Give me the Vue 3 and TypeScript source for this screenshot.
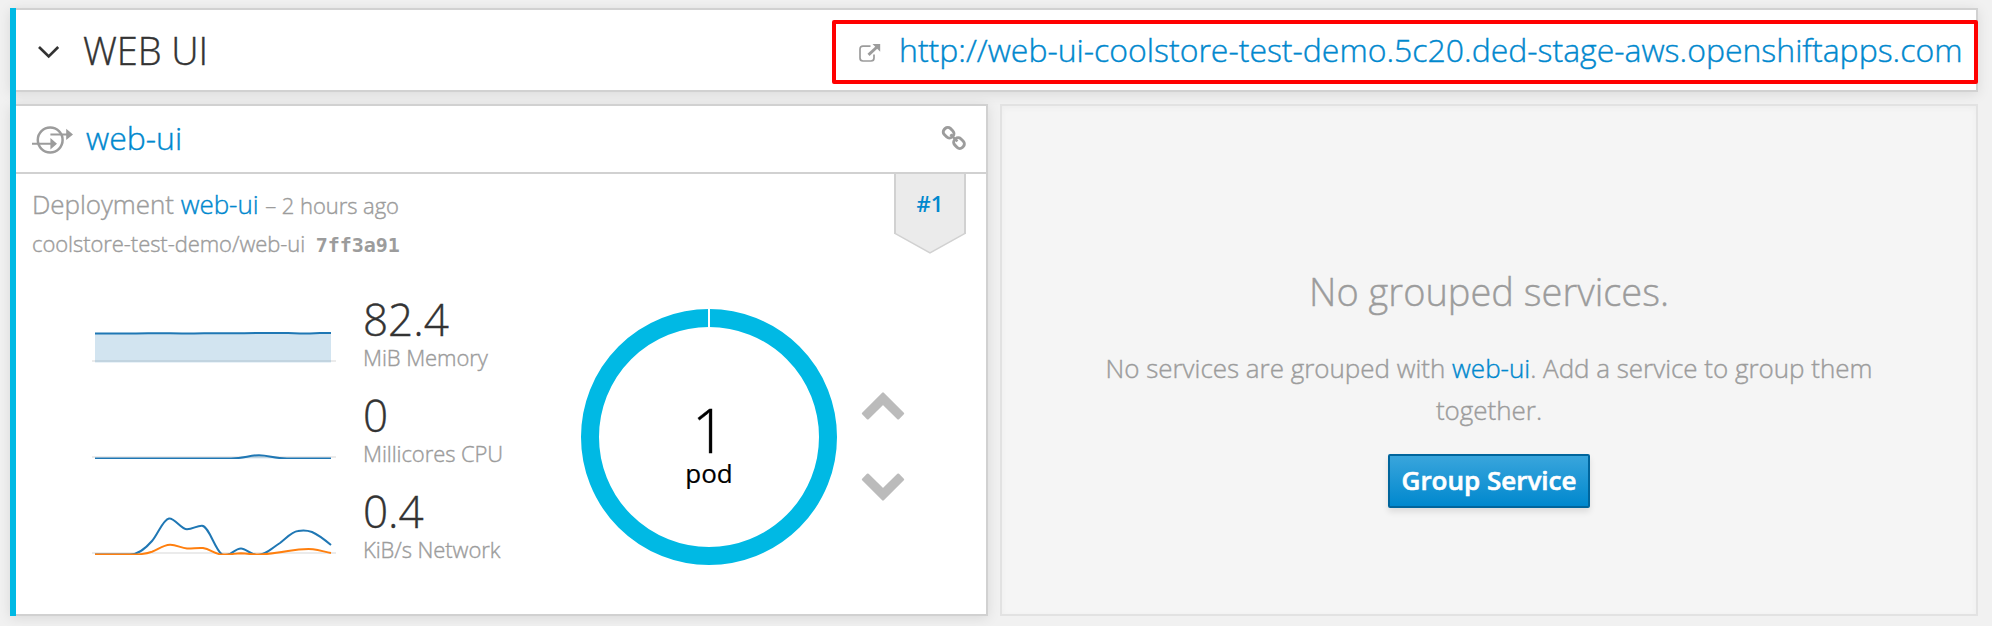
<script setup lang="ts">
interface Series { color: string; line: string; area?: string }
interface Metric { value: string; label: string; series: Series[] }

const routeUrl = 'http://web-ui-coolstore-test-demo.5c20.ded-stage-aws.openshiftapps.com'

const metrics: Metric[] = [
  {
    value: '82.4',
    label: 'MiB Memory',
    series: [
      {
        color: '#1f77b4',
        line: 'M3 41.6H44L56 41.2H78L90 41.6H102L112 41.2H152L166 41H196L208 41.4H218L228 41H239',
        area: 'M3 41.6L44 41.6L56 41.2L152 41.2L239 41V70.6H3Z',
      },
    ],
  },
  {
    value: '0',
    label: 'Millicores CPU',
    series: [
      {
        color: '#1f77b4',
        line: 'M3 70.5H139C152 70.5 157 67.2 167 67.2C177 67.2 182 70.5 195 70.5H239',
        area: 'M139 70.5C152 70.5 157 67.2 167 67.2C177 67.2 182 70.5 195 70.5Z',
      },
    ],
  },
  {
    value: '0.4',
    label: 'KiB/s Network',
    series: [
      {
        color: '#1f77b4',
        line: 'M3 70.6H38C46 70.6 53 65 60 57C66 50 71 35.5 77 34.5C83 34 89 45 95 45.3C101 45 105 41.5 110 41.7C117 42 123 66 130 70.4Q133 72 138 70C142 67.5 145 64.5 149 64.5C154 64.5 159 71 166 71C173 71 179 65 188 59C195 53.5 200 47.5 206 47C211 46 216 46.5 220 48C227 51 233 56 239 61',
      },
      {
        color: '#ff7f0e',
        line: 'M3 70.6H40C49 70.6 53 70 60 67.7C66 65.5 71 61 78 60.7C84 60.5 89 64 95 64.5C101 64.7 105 63.5 111 64C118 65 123 70 130 70.6C139 70.8 143 69.3 149 69.3C157 69.5 160 70.7 168 70.5C178 70 187 68.6 196 67.1C205 65.5 214 64.8 221 65.2C228 66 233 68 239 69',
      },
    ],
  },
]
</script>

<template>
  <main class="overview">
    <section class="group">
      <header class="panel group-head">
        <svg class="toggle" width="24" height="16" viewBox="0 0 24 16">
          <path d="M3 3L12.7 12.4L22.2 3" fill="none" stroke="#333" stroke-width="2.7" />
        </svg>
        <h2>WEB UI</h2>
        <div class="route">
          <svg width="22" height="20" viewBox="0 0 22 20">
            <path d="M11.5 3.2H4Q1 3.2 1 6.2V15Q1 18 4 18H12Q15 18 15 15V11.5" fill="none" stroke="#9c9c9c" stroke-width="1.7" />
            <path d="M9.5 11.8L18 4" stroke="#9c9c9c" stroke-width="3" />
            <path d="M13.5 1H21.2V8.8Z" fill="#9c9c9c" />
          </svg>
          <a>{{ routeUrl }}</a>
        </div>
      </header>

      <div class="columns">
        <article class="panel service">
          <header class="service-head">
            <svg width="42" height="28" viewBox="0 0 42 28" fill="none" stroke="#9c9c9c">
              <circle cx="18.2" cy="14" r="12.4" stroke-width="2.5" />
              <path d="M0 17.7H20M18.4 8.4H36" stroke-width="2" />
              <path d="M18.4 12L25 17.7L18.4 23.4ZM34.2 2.8L41 8.4L34.2 14Z" fill="#9c9c9c" stroke="none" />
            </svg>
            <a>web-ui</a>
            <svg class="chain" width="26" height="26" viewBox="0 0 26 26" fill="none" stroke="#9c9c9c" stroke-width="2.9">
              <rect x="-5.4" y="-4.3" width="10.8" height="8.6" rx="3.6" transform="translate(7.6 7.7) rotate(45)" />
              <rect x="-5.4" y="-4.3" width="10.8" height="8.6" rx="3.6" transform="translate(18 18.1) rotate(45)" />
              <path d="M9.4 9.4L16.4 16.4" stroke-width="2.6" />
            </svg>
          </header>

          <div class="deployment">
            <div class="info">
              <p class="name">Deployment <a>web-ui</a> <small>– 2 hours ago</small></p>
              <p class="image">coolstore-test-demo/web-ui <code>7ff3a91</code></p>
            </div>
            <div class="ribbon">
              <svg width="72" height="80" viewBox="0 0 72 80">
                <path d="M1 0V59.2L36 79L71 59.2V0" fill="#ebebeb" />
                <path d="M1 0V60M71 0V60" stroke="#d1d1d1" stroke-width="2" />
                <path d="M.5 59.2L36 78.9L71.5 59.2" fill="none" stroke="#d1d1d1" stroke-width="1.5" />
              </svg>
              <a>#1</a>
            </div>
          </div>

          <div class="status">
            <ul class="metrics">
              <li v-for="m in metrics" :key="m.label">
                <svg width="244" height="71" viewBox="0 0 244 71">
                  <path d="M0 69H244" stroke="#ebebeb" stroke-width="2" />
                  <template v-for="s in m.series" :key="s.color">
                    <path v-if="s.area" :d="s.area" :fill="s.color" opacity=".2" />
                    <path :d="s.line" :stroke="s.color" fill="none" stroke-width="2" />
                  </template>
                </svg>
                <div class="reading">
                  <strong>{{ m.value }}</strong>
                  <span>{{ m.label }}</span>
                </div>
              </li>
            </ul>
            <div class="donut">
              <svg width="256" height="256" viewBox="0 0 256 256">
                <circle cx="128" cy="128" r="119" fill="none" stroke="#00b9e4" stroke-width="18" />
                <path d="M128 0V20" stroke="#fff" stroke-width="2" />
              </svg>
              <div class="pods"><b>1</b><span>pod</span></div>
            </div>
            <div class="scale">
              <svg width="44" height="30" viewBox="0 0 44 30">
                <path d="M22 2.5L42 22.5L37.2 27.3L22 12.4L6.8 27.3L2 22.5Z" />
              </svg>
              <svg width="44" height="30" viewBox="0 0 44 30">
                <path d="M22 27.5L42 7.5L37.2 2.7L22 17.6L6.8 2.7L2 7.5Z" />
              </svg>
            </div>
          </div>
        </article>

        <aside class="empty">
          <h3>No grouped services.</h3>
          <p>No services are grouped with <a>web-ui</a>. Add a service to group them together.</p>
          <button type="button">Group Service</button>
        </aside>
      </div>
    </section>
  </main>
</template>

<style>
html,
body {
  margin: 0;
  background: #f1f1f1;
}
</style>

<style scoped>
.overview {
  box-sizing: border-box;
  width: 1992px;
  height: 626px;
  padding: 8px 14px 0 10px;
  overflow: hidden;
  color: #9c9c9c;
  font: 300 26px/1 "Open Sans", sans-serif;
  -webkit-text-stroke: 0.4px currentColor;
}
.overview * {
  box-sizing: border-box;
}
h2,
h3,
p,
ul {
  margin: 0;
  padding: 0;
  font-weight: 300;
}
a {
  color: #0088ce;
}
svg {
  display: block;
  flex: none;
}
.group {
  position: relative;
  display: flex;
  flex-direction: column;
  gap: 12px;
  height: 608px;
}
.group::before {
  content: "";
  position: absolute;
  z-index: 1;
  inset: 0 auto 0 0;
  width: 6px;
  background: #00b9e4;
}
.panel {
  background: #fff;
  border: 2px solid #d1d1d1;
  border-left: 0;
  box-shadow: 0 2px 12px rgba(3, 3, 3, 0.1);
}
.group-head {
  display: flex;
  align-items: center;
  height: 84px;
  padding-left: 26px;
}
.toggle {
  margin-top: 3px;
}
h2 {
  margin-left: 23px;
  color: #333;
  font-size: 38px;
  line-height: 80px;
  padding-bottom: 1px;
  letter-spacing: -0.1px;
}
.route {
  display: flex;
  align-items: center;
  width: 1146px;
  height: 64px;
  margin: 4px -2px 0 auto;
  padding-left: 23px;
  border: 4px solid #f00;
  border-radius: 2px;
}
.route svg {
  margin-top: 2px;
}
.route a {
  margin-left: 18px;
  font-size: 32px;
  line-height: 52px;
  padding-bottom: 5px;
  white-space: nowrap;
  letter-spacing: -0.01px;
}
.columns {
  display: grid;
  grid-template-columns: 978px 978px;
  gap: 12px;
  height: 512px;
}
.service {
  padding-left: 6px;
}
.service-head {
  display: flex;
  align-items: center;
  height: 68px;
  padding: 0 19px 0 16px;
  border-bottom: 2px solid #d1d1d1;
}
.service-head > svg:first-child {
  margin-top: 2px;
}
.chain {
  margin-bottom: 2px;
}
.service-head a {
  margin: 0 auto 0 12px;
  font-size: 32px;
  line-height: 62px;
  padding-bottom: 2px;
}
.deployment {
  display: flex;
  justify-content: space-between;
  height: 110px;
  padding: 11px 20px 0 16px;
}
.name {
  line-height: 38px;
  letter-spacing: -0.05px;
}
.name small {
  font-size: 22px;
}
.image {
  margin-top: 2px;
  font-size: 22px;
  line-height: 34px;
  letter-spacing: -0.06px;
}
.image code {
  margin-left: 5px;
  font: 700 20px "DejaVu Sans Mono", monospace;
  -webkit-text-stroke: 0;
}
.ribbon {
  display: grid;
  margin-top: -11px;
}
.ribbon > * {
  grid-area: 1 / 1;
}
.ribbon a {
  justify-self: center;
  font-size: 22px;
  font-weight: 600;
  line-height: 59px;
  -webkit-text-stroke: 0;
}
.status {
  display: flex;
}
.metrics {
  display: grid;
  grid-auto-rows: 96px;
  width: 489px;
  margin-left: 76px;
  list-style: none;
}
.metrics li {
  display: flex;
}
.metrics svg {
  margin-top: 8px;
}
.reading {
  display: flex;
  flex-direction: column;
  margin-left: 27px;
}
.reading strong {
  color: #333;
  font-size: 44px;
  font-weight: 300;
  line-height: 70px;
}
.reading span {
  margin-top: -15px;
  font-size: 22px;
  line-height: 36px;
  letter-spacing: -0.08px;
}
.donut {
  display: grid;
  margin-top: 25px;
}
.donut > * {
  grid-area: 1 / 1;
}
.pods {
  display: flex;
  flex-direction: column;
  align-items: center;
  color: #000;
  font-weight: 400;
}
.pods b {
  margin-top: 85px;
  font-size: 60px;
  font-weight: 300;
  line-height: 72px;
}
.pods span {
  margin-top: -10px;
  line-height: 34px;
  -webkit-text-stroke: 0.2px currentColor;
}
.scale {
  display: flex;
  flex-direction: column;
  gap: 51px;
  margin: 107px 0 0 23.5px;
  fill: #bbb;
  stroke: #bbb;
  stroke-width: 2.4;
  stroke-linejoin: round;
}
.empty {
  display: flex;
  flex-direction: column;
  align-items: center;
  padding-top: 159px;
  text-align: center;
  background: #f5f5f5;
  border: 2px solid #e2e2e2;
  box-shadow: inset 0 2px 6px rgba(3, 3, 3, 0.035);
}
h3 {
  font-size: 38px;
  line-height: 52px;
}
.empty p {
  width: 800px;
  margin-top: 30px;
  line-height: 42px;
  letter-spacing: -0.02px;
}
button {
  width: 202px;
  height: 54px;
  margin-top: 23px;
  padding: 0 0 2px;
  color: #fff;
  font: 600 26px/46px "Open Sans", sans-serif;
  background: linear-gradient(#39a5dc, #0088ce);
  border: 2px solid #00659c;
  border-radius: 2px;
  box-shadow: 0 4px 6px rgba(3, 3, 3, 0.1);
  -webkit-text-stroke: 0.6px currentColor;
}
</style>
